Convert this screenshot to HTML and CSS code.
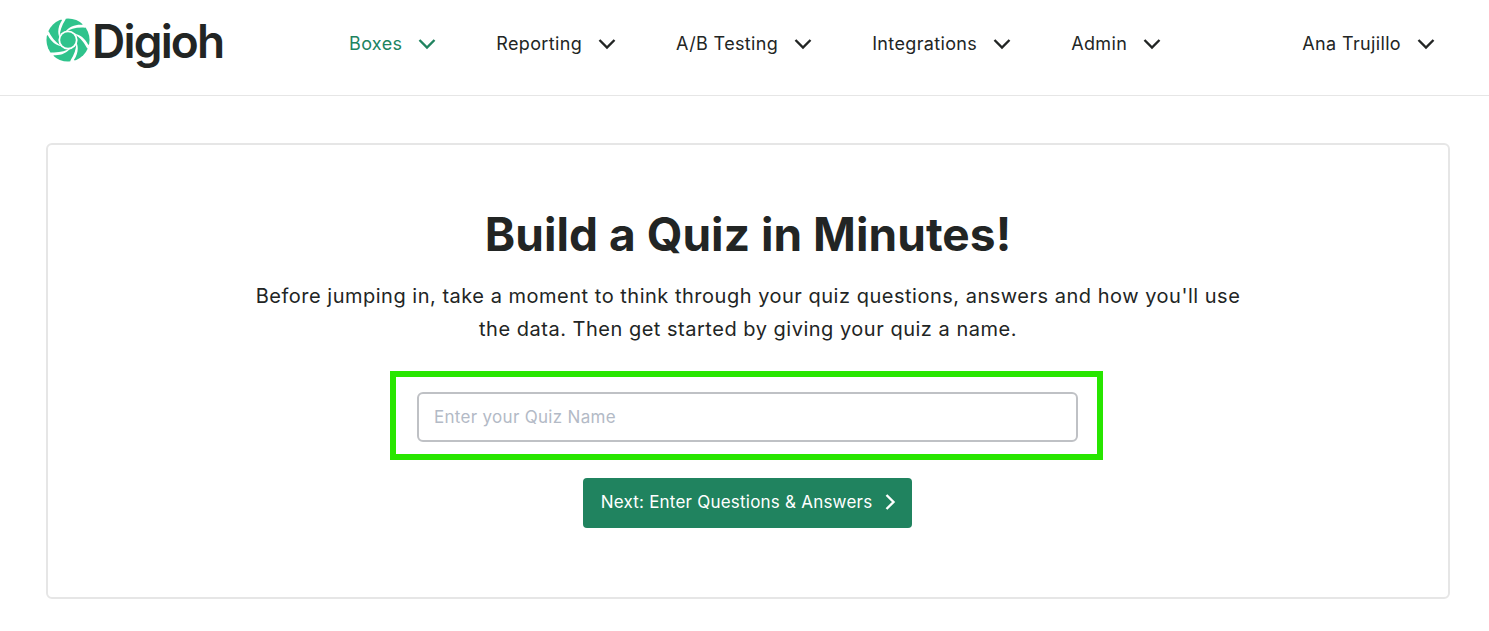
FILE: index.html
```html
<!DOCTYPE html>
<html>
<head>
  <meta charset="UTF-8">
  <meta name="viewport" content="width=device-width, initial-scale=1.0">
  <title>Build a Quiz</title>
  <link rel="stylesheet" href="styles.css">
</head>
<body>
  <div class="header">
    <a class="logo" href="#">
      <svg class="logo-mark" viewBox="0 0 48 48">
        <circle cx="24" cy="24" r="23.500" fill="#2fc38c"/>
        <g fill="#fff">
          <path id="slit" d="M21 15.500C26 12 33 10 42 10.500L49 8L42 2L39.500 7.500C32 7 25 9.500 21 15.500Z"/>
          <use href="#slit" transform="rotate(60 24 24)"/>
          <use href="#slit" transform="rotate(120 24 24)"/>
          <use href="#slit" transform="rotate(180 24 24)"/>
          <use href="#slit" transform="rotate(240 24 24)"/>
          <use href="#slit" transform="rotate(300 24 24)"/>
        </g>
        <circle cx="24" cy="24" r="10.500" fill="#fff"/>
        <circle cx="24" cy="24" r="8.500" fill="#2fc38c"/>
      </svg>
      <span class="logo-text">Digioh</span>
    </a>
    <ul class="nav">
      <li class="nav-item active">Boxes<svg class="chev" viewBox="0 0 18 12"><path d="M1.500 2L9 9.500L16.500 2"/></svg></li>
      <li class="nav-item">Reporting<svg class="chev" viewBox="0 0 18 12"><path d="M1.500 2L9 9.500L16.500 2"/></svg></li>
      <li class="nav-item">A/B Testing<svg class="chev" viewBox="0 0 18 12"><path d="M1.500 2L9 9.500L16.500 2"/></svg></li>
      <li class="nav-item">Integrations<svg class="chev" viewBox="0 0 18 12"><path d="M1.500 2L9 9.500L16.500 2"/></svg></li>
      <li class="nav-item">Admin<svg class="chev" viewBox="0 0 18 12"><path d="M1.500 2L9 9.500L16.500 2"/></svg></li>
    </ul>
    <div class="nav-item">Ana Trujillo<svg class="chev" viewBox="0 0 18 12"><path d="M1.500 2L9 9.500L16.500 2"/></svg></div>
  </div>

  <div class="main">
    <h1>Build a Quiz in Minutes!</h1>
    <p class="intro">Before jumping in, take a moment to think through your quiz questions, answers and how you'll use the data. Then get started by giving your quiz a name.</p>
    <div class="highlight">
      <input type="text" class="name-input" placeholder="Enter your Quiz Name">
    </div>
    <button class="next">Next: Enter Questions &amp; Answers<svg class="next-icon" viewBox="0 0 12 18"><path d="M2.500 2l7 7-7 7"/></svg></button>
  </div>
</body>
</html>
```

FILE: styles.css
```css
* {padding: 0; margin: 0; box-sizing: border-box;}

html,body {
  width: 100%;
  height: 100%;
  background: #fff;
  overflow: hidden;
}
body {
  font-family: "Inter", "Liberation Sans", sans-serif;
  color: #222524;
}
.header {
  display: flex;
  align-items: center;
  height: 96px;
  padding: 0 54px 8px 46px;
  border-bottom: 1px solid #e6e6e6;
}
.logo {
  display: flex;
  align-items: center;
  width: 303px;
  margin-bottom: 6px;
  color: #222524;
  text-decoration: none;
}
.logo-mark {
  width: 44px;
  height: 46px;
  flex: none;
  margin-bottom: 2px;
}
.logo-text {
  font-size: 46px;
  font-weight: 600;
  letter-spacing: -1.8px;
  line-height: 46px;
  margin-left: 2px;
}
.nav {
  display: flex;
  gap: 60px;
  list-style: none;
  flex: 1;
}
.nav-item {
  display: flex;
  align-items: center;
  font-size: 18px;
  letter-spacing: 0.35px;
  white-space: nowrap;
}
.nav-item.active {
  color: #20835f;
}
.chev {
  width: 18px;
  height: 12px;
  margin-left: 16px;
  fill: none;
  stroke: currentColor;
  stroke-width: 2.4;
}
.main {
  display: flex;
  flex-direction: column;
  align-items: center;
  height: 456px;
  margin: 47px 39px 0 46px;
  padding-top: 60px;
  border: 2px solid #e6e6e6;
  border-radius: 6px;
}
h1 {
  font-size: 46px;
  font-weight: 700;
  line-height: 58px;
  letter-spacing: 0.05px;
}
.intro {
  width: 1000px;
  margin-top: 17px;
  font-size: 20px;
  letter-spacing: 0.51px;
  line-height: 33px;
  text-align: center;
}
.highlight {
  width: 713px;
  height: 89px;
  margin: 25px 3px 0 0;
  padding: 15px 19px 15px 21px;
  border: 6px solid #28e600;
}
.name-input {
  display: block;
  width: 100%;
  height: 50px;
  padding: 0 15px;
  border: 2px solid #bfc1c5;
  border-radius: 6px;
  font-family: inherit;
  font-size: 17px;
  letter-spacing: 0.3px;
  outline: none;
}
.name-input::placeholder {
  color: #b3bac6;
  opacity: 1;
}
.next {
  display: flex;
  align-items: center;
  height: 50px;
  margin: 18px 1px 0 0;
  padding: 0 16px 2px 18px;
  border: 0;
  border-radius: 4px;
  background: #20835f;
  color: #fff;
  font-family: inherit;
  font-size: 17px;
  letter-spacing: 0.22px;
}
.next-icon {
  width: 12px;
  height: 18px;
  margin-left: 12px;
  fill: none;
  stroke: #fff;
  stroke-width: 2.4;
}
```
